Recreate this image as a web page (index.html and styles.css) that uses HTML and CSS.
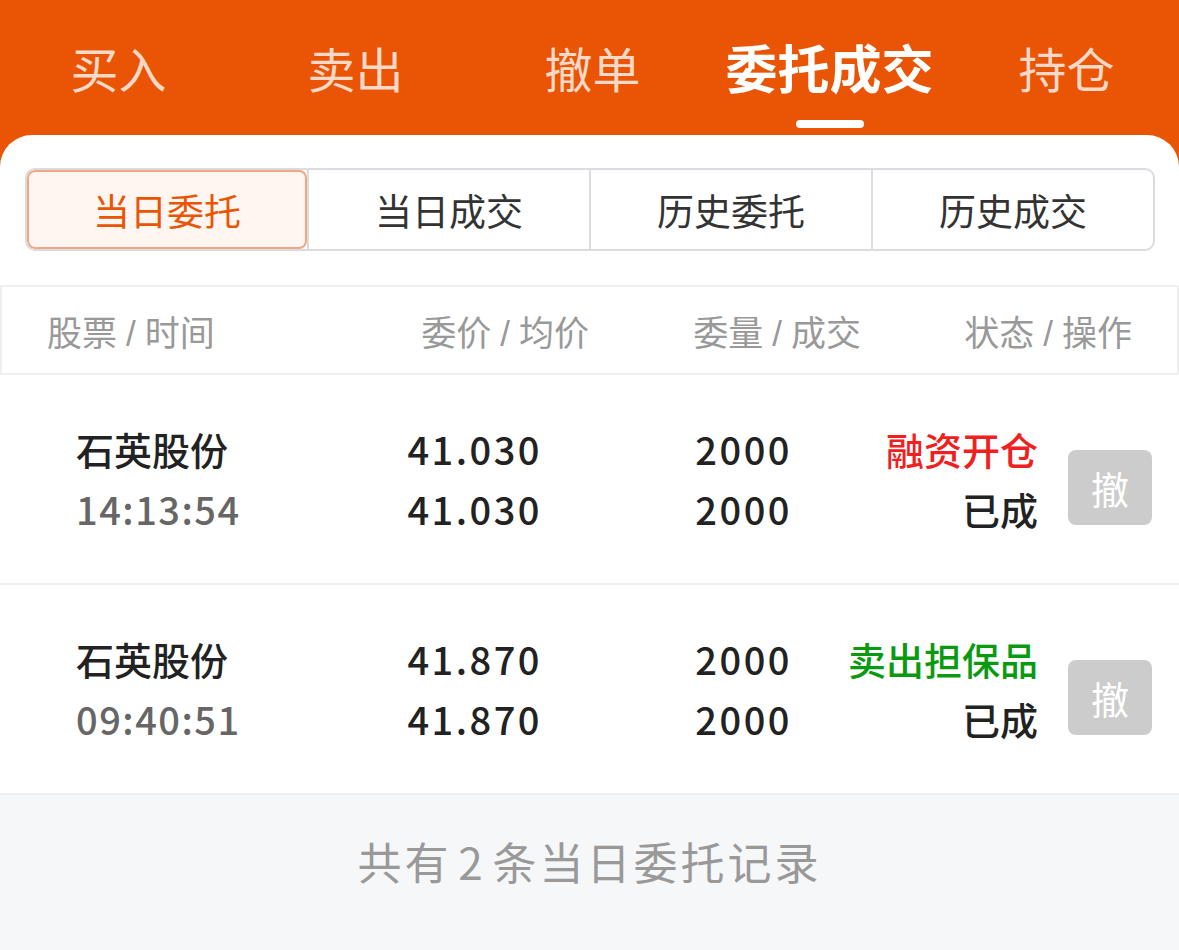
FILE: index.html
```html
<!DOCTYPE html>
<html lang="zh-CN">
<head>
<meta charset="utf-8">
<title>委托成交</title>
<link rel="stylesheet" href="styles.css">
</head>
<body>
<div class="page">
  <nav class="tabs">
    <div class="tab">买入</div>
    <div class="tab">卖出</div>
    <div class="tab">撤单</div>
    <div class="tab active">委托成交<span class="indicator"></span></div>
    <div class="tab">持仓</div>
  </nav>
  <main class="card">
    <div class="seg">
      <div class="seg-item active">当日委托</div>
      <div class="seg-item">当日成交</div>
      <div class="seg-item">历史委托</div>
      <div class="seg-item">历史成交</div>
    </div>
    <div class="thead">
      <div class="th left">股票<span class="sl">/</span>时间</div>
      <div class="th">委价<span class="sl">/</span>均价</div>
      <div class="th">委量<span class="sl">/</span>成交</div>
      <div class="th">状态<span class="sl">/</span>操作</div>
    </div>
    <div class="row">
      <div class="cell left">
        <div class="name">石英股份</div>
        <div class="time">14:13:54</div>
      </div>
      <div class="cell num"><div>41.030</div><div>41.030</div></div>
      <div class="cell num"><div>2000</div><div>2000</div></div>
      <div class="cell status"><div class="red">融资开仓</div><div>已成</div></div>
      <div class="cell op"><button class="cancel">撤</button></div>
    </div>
    <div class="row">
      <div class="cell left">
        <div class="name">石英股份</div>
        <div class="time">09:40:51</div>
      </div>
      <div class="cell num"><div>41.870</div><div>41.870</div></div>
      <div class="cell num"><div>2000</div><div>2000</div></div>
      <div class="cell status"><div class="green">卖出担保品</div><div>已成</div></div>
      <div class="cell op"><button class="cancel">撤</button></div>
    </div>
    <footer class="foot">共有 2 条当日委托记录</footer>
  </main>
</div>
</body>
</html>
```

FILE: styles.css
```css
* { box-sizing: border-box; }
html, body {
  margin: 0;
  padding: 0;
  height: 100%;
}
body {
  font-family: "Noto Sans CJK SC", "Noto Sans", "Liberation Sans", sans-serif;
  background: #E95504;
  overflow: hidden;
}
.page {
  display: flex;
  flex-direction: column;
  height: 950px;
}
.tabs {
  display: grid;
  grid-template-columns: repeat(5, 237px);
  height: 135px;
  flex: none;
}
.tab {
  display: flex;
  flex-direction: column;
  align-items: center;
  padding-top: 37px;
  font-size: 48px;
  line-height: 60px;
  color: rgba(255, 255, 255, 0.78);
  white-space: nowrap;
}
.tab.active {
  color: #fff;
  font-weight: 700;
  font-size: 52px;
}
.indicator {
  display: block;
  width: 68px;
  height: 8px;
  border-radius: 4px;
  background: #fff;
  margin-top: 23px;
}
.card {
  flex: 1;
  background: #fff;
  border-radius: 32px 32px 0 0;
  display: flex;
  flex-direction: column;
  overflow: hidden;
}
.seg {
  display: flex;
  margin: 33px 24px 0 25px;
  height: 83px;
  border: 2px solid #DADCE1;
  border-radius: 10px;
  overflow: hidden;
}
.seg-item {
  flex: 1;
  display: flex;
  align-items: center;
  justify-content: center;
  font-size: 37px;
  color: #333;
  border-left: 2px solid #DADCE1;
}
.seg-item:first-child { border-left: none; }
.seg-item.active {
  color: #E95504;
  background: #FFF5F1;
  box-shadow: inset 0 0 0 2px #F4A680;
  border-radius: 8px;
}
.thead {
  display: grid;
  grid-template-columns: 300px 242px 272px 271px;
  margin-top: 34px;
  height: 90px;
  padding-left: 45px;
  align-items: center;
  border: 2px solid #EFEFEF;
  font-size: 35px;
  color: #999;
}
.th { text-align: right; }
.th.left { text-align: left; }
.sl {
  display: inline-block;
  margin: 0 9px;
  font-family: "Liberation Sans", sans-serif;
  font-weight: 300;
}
.row {
  display: grid;
  grid-template-columns: 250px 214px 250px 248px 114px;
  height: 210px;
  padding-left: 76px;
  align-items: center;
  border-bottom: 2px solid #EFEFEF;
  font-size: 38px;
  line-height: 60px;
  color: #222;
}
.cell { text-align: right; }
.cell.left { text-align: left; }
.name { font-weight: 500; color: #222; }
.time {
  color: #666;
  font-weight: 500;
  letter-spacing: 1.5px;
}
.num {
  font-weight: 500;
  letter-spacing: 2.5px;
  margin-right: -2px;
}
.status { font-weight: 500; }
.red { color: #F0201E; }
.green { color: #0A9A10; }
.op {
  display: flex;
  justify-content: flex-end;
}
.cancel {
  width: 84px;
  height: 75px;
  border: none;
  border-radius: 8px;
  background: #CCCCCC;
  color: #fff;
  font-family: "Noto Sans CJK SC", sans-serif;
  font-size: 38px;
  padding: 0;
  margin-top: 16px;
}
.foot {
  flex: 1;
  background: #F6F7F9;
  display: flex;
  justify-content: center;
  padding-top: 36px;
  font-size: 44px;
  line-height: 60px;
  color: #999;
  letter-spacing: 3px;
  word-spacing: -6px;
}
```
